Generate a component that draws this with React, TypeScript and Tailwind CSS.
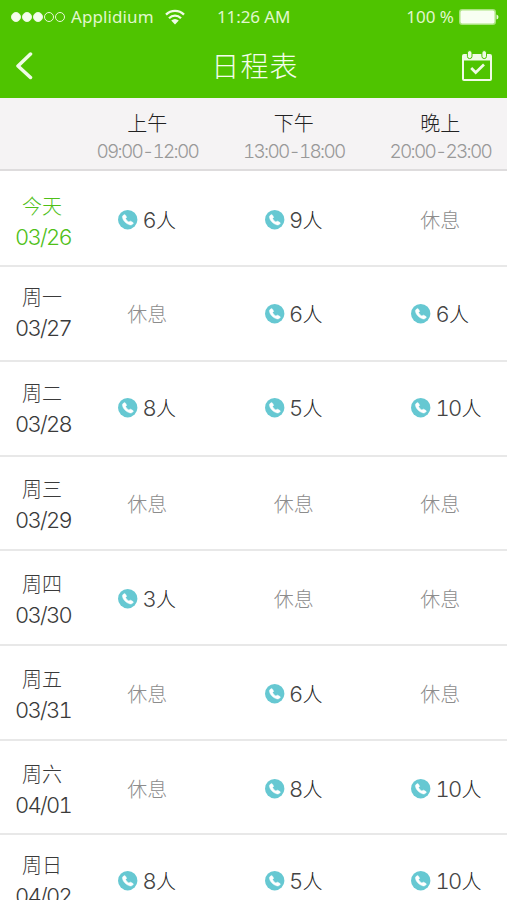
import clsx from "clsx";

type Cell = number | null;

type Day = {
  label: string;
  date: string;
  cells: [Cell, Cell, Cell];
  // row height plus the vertical nudge of the date block and the slots
  row: string;
  labelPad: string;
  cellPad: string;
};

const shifts = [
  { name: "上午", hours: "09:00-12:00" },
  { name: "下午", hours: "13:00-18:00" },
  { name: "晚上", hours: "20:00-23:00" },
];

const days: Day[] = [
  { label: "今天", date: "03/26", cells: [6, 9, null], row: "h-[96px]", labelPad: "pt-[21px]", cellPad: "pt-[34px]" },
  { label: "周一", date: "03/27", cells: [null, 6, 6], row: "h-[95px]", labelPad: "pt-[16px]", cellPad: "pt-[32px]" },
  { label: "周二", date: "03/28", cells: [8, 5, 10], row: "h-[95px]", labelPad: "pt-[17px]", cellPad: "pt-[31px]" },
  { label: "周三", date: "03/29", cells: [null, null, null], row: "h-[94px]", labelPad: "pt-[18px]", cellPad: "pt-[32px]" },
  { label: "周四", date: "03/30", cells: [3, null, null], row: "h-[95px]", labelPad: "pt-[19px]", cellPad: "pt-[33px]" },
  { label: "周五", date: "03/31", cells: [null, 6, null], row: "h-[95px]", labelPad: "pt-[19px]", cellPad: "pt-[33px]" },
  { label: "周六", date: "04/01", cells: [null, 8, 10], row: "h-[94px]", labelPad: "pt-[19px]", cellPad: "pt-[33px]" },
  { label: "周日", date: "04/02", cells: [8, 5, 10], row: "h-[95px]", labelPad: "pt-[16px]", cellPad: "pt-[31px]" },
];

function PhoneIcon() {
  return (
    <svg className="size-5 shrink-0" viewBox="0 0 20 20" aria-hidden>
      <circle cx="9.700" cy="9.700" r="9.700" fill="#66c8d2" />
      <path
        d="M5 5.600 6.300 4.700Q6.900 4.400 7.300 4.900L8.500 6.900Q8.800 7.500 8.200 7.900L7.500 8.500Q8.500 10.800 10.900 12L11.800 11.400Q12.300 11 12.800 11.300L15 12.600Q15.600 13 15.200 13.500L14.200 14.500Q13.300 15.200 12 14.900C8.300 14 5.200 11 4.500 7.600Q4.200 6.200 5 5.600Z"
        fill="#fff"
        stroke="#fff"
        strokeWidth=".5"
      />
    </svg>
  );
}

function WifiIcon() {
  return (
    <svg className="h-4 w-5" viewBox="0 0 20 16" fill="none" stroke="#f0fbe6" strokeWidth="2.3" aria-hidden>
      <path d="M1 5.6C6 .6 14 .6 19 5.6" />
      <path d="M4 9.200C7.500 5.700 12.500 5.700 16 9.200" />
      <path d="M6.2 11.6Q10 8.6 13.8 11.600L10 15.4Z" fill="#f0fbe6" stroke="none" />
    </svg>
  );
}

function CalendarIcon() {
  return (
    <svg className="h-8 w-8" viewBox="0 0 32 32" fill="none" aria-hidden>
      <rect x="2" y="5" width="28" height="25" rx="1" stroke="#f0fbe6" strokeWidth="2" />
      <path d="M2 5h28v5.500H2Z" fill="#f0fbe6" />
      <rect x="6.400" y=".6" width="4.600" height="8" rx="2.300" fill="#f0fbe6" stroke="#4fc400" strokeWidth="1" />
      <rect x="20.900" y=".6" width="4.600" height="8" rx="2.300" fill="#f0fbe6" stroke="#4fc400" strokeWidth="1" />
      <path d="m10.200 18 4.500 4.500 8.300-8" stroke="#f0fbe6" strokeWidth="2.700" />
    </svg>
  );
}

function StatusBar() {
  return (
    <div className="flex h-[34px] items-center pl-[11px] pr-[8px] font-['Noto_Sans',sans-serif] text-[17px] font-normal text-[#e0f7cd]">
      <div className="flex w-[60px] shrink-0 gap-[1.500px]">
        {[true, true, true, false, false].map((filled, i) => (
          <span
            key={i}
            className={clsx("size-[9.500px] rounded-full border border-[#e8f9da]", filled && "bg-[#f4fdec]")}
          />
        ))}
      </div>
      <span className="w-[94px] shrink-0 tracking-[0.1px]">Applidium</span>
      <WifiIcon />
      <span className="ml-8 whitespace-nowrap tracking-[-0.1px]">11:26 AM</span>
      <span className="ml-auto whitespace-nowrap">100 %</span>
      <svg className="ml-[5px] h-4 w-10" viewBox="0 0 40 16" aria-hidden>
        <rect x=".75" y=".75" width="35.500" height="14.500" rx="2.500" fill="#f8fff2" stroke="#a9e37e" strokeWidth="1.500" />
        <path d="M37.500 5.500Q39.500 6 39.500 8T37.500 10.500Z" fill="#e8f9da" />
      </svg>
    </div>
  );
}

function Slot({ count, pad }: { count: Cell; pad: string }) {
  if (count === null) {
    return (
      <div className={clsx(pad, "text-center text-[20px] leading-[32px] text-[#8c8c8c]")}>休息</div>
    );
  }
  return (
    <div className={clsx(pad, "flex pl-[44px]")}>
      <div className="flex h-[30px] items-center gap-[4.500px]">
        <PhoneIcon />
        <span className="whitespace-nowrap text-[22px] leading-[30px] tracking-[-1.700px]">
          {count}
          <span className="ml-px text-[20px] text-[#222]">人</span>
        </span>
      </div>
    </div>
  );
}

export default function App() {
  return (
    <div className="h-[900px] w-[507px] overflow-hidden bg-white font-['Inter','Noto_Sans_CJK_SC',sans-serif] font-light text-[#444] tabular-nums">
      <header className="h-[98px] bg-[#4fc400]">
        <StatusBar />
        <div className="flex h-[64px] items-center justify-between pl-[15px] pr-[14px]">
          <button type="button" aria-label="Back" className="w-8">
            <svg className="h-[28px] w-[18px]" viewBox="0 0 18 28" fill="none" aria-hidden>
              <path d="M15.500 2 3 14l12.500 11.500" stroke="#f0fbe6" strokeWidth="3.500" strokeLinecap="round" strokeLinejoin="round" />
            </svg>
          </button>
          <h1 className="pt-[2px] pl-[2px] text-[28px] tracking-[1.200px] text-[#f4fdec]">日程表</h1>
          <button type="button" aria-label="Calendar">
            <CalendarIcon />
          </button>
        </div>
      </header>

      <div className="grid h-[73px] grid-cols-[74px_146.5px_146.5px_146.5px] border-b-2 border-[#dedcdd] bg-[#f5f3f4]">
        <div />
        {shifts.map((shift) => (
          <div key={shift.name} className="pt-[11px] text-center">
            <div className="text-[20px] leading-[30px] text-[#222]">{shift.name}</div>
            <div className="text-[19px] leading-[26px] tracking-[-1.750px] text-[#999]">{shift.hours}</div>
          </div>
        ))}
      </div>

      {days.map((day, i) => (
        <div
          key={day.date}
          className={clsx(day.row, "grid grid-cols-[74px_146.5px_146.5px_146.5px] border-b-2 border-[#e8e8e8]")}
        >
          <div className={clsx(day.labelPad, "pl-[15px]", i === 0 ? "text-[#4fc018]" : "text-[#3a3a3a]")}>
            <div className="pl-[7px] text-[20px] leading-[30px]">{day.label}</div>
            <div className="text-[22px] leading-[30px] tracking-[-1.700px]">{day.date}</div>
          </div>
          {day.cells.map((count, j) => (
            <Slot key={j} count={count} pad={day.cellPad} />
          ))}
        </div>
      ))}
    </div>
  );
}
